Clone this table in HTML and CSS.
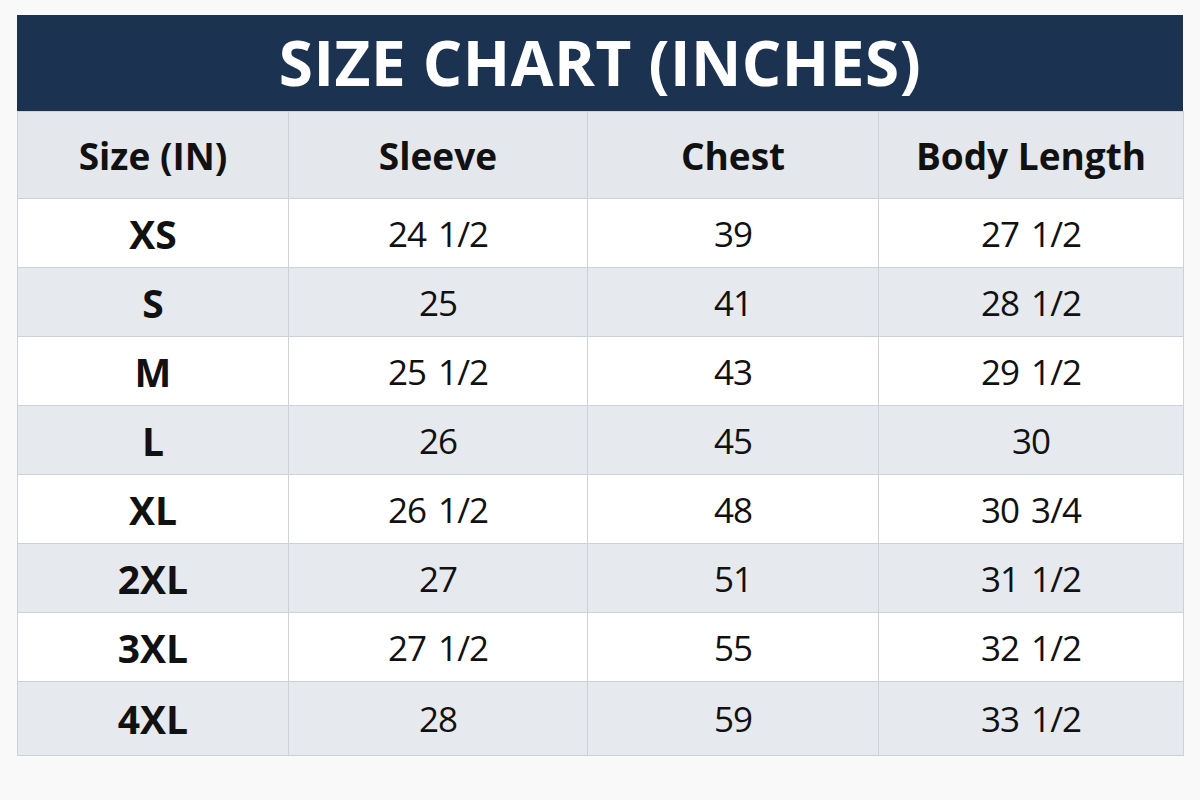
FILE: index.html
```html
<!DOCTYPE html>
<html lang="en">
<head>
<meta charset="utf-8">
<title>Size Chart</title>
<link rel="stylesheet" href="styles.css">
</head>
<body>
<div class="chart">
  <div class="title">SIZE CHART (INCHES)</div>
  <table class="grid">
    <colgroup>
      <col class="c1"><col class="c2"><col class="c3"><col class="c4">
    </colgroup>
    <thead>
      <tr><th>Size (IN)</th><th>Sleeve</th><th>Chest</th><th>Body Length</th></tr>
    </thead>
    <tbody>
      <tr><td class="sz">XS</td><td>24 1/2</td><td>39</td><td>27 1/2</td></tr>
      <tr><td class="sz">S</td><td>25</td><td>41</td><td>28 1/2</td></tr>
      <tr><td class="sz">M</td><td>25 1/2</td><td>43</td><td>29 1/2</td></tr>
      <tr><td class="sz">L</td><td>26</td><td>45</td><td>30</td></tr>
      <tr><td class="sz">XL</td><td>26 1/2</td><td>48</td><td>30 3/4</td></tr>
      <tr><td class="sz">2XL</td><td>27</td><td>51</td><td>31 1/2</td></tr>
      <tr><td class="sz">3XL</td><td>27 1/2</td><td>55</td><td>32 1/2</td></tr>
      <tr><td class="sz">4XL</td><td>28</td><td>59</td><td>33 1/2</td></tr>
    </tbody>
  </table>
</div>
</body>
</html>
```
FILE: styles.css
```css
html, body {
  margin: 0;
  padding: 0;
  background: #f9f9f9;
}
body {
  font-family: "Open Sans", "Liberation Sans", sans-serif;
  color: #111;
  padding: 15px 0 0 17px;
}
.chart {
  width: 1166px;
}
.title {
  background: #1b3350;
  color: #fff;
  font-weight: 700;
  font-size: 62px;
  height: 96px;
  line-height: 94px;
  padding-bottom: 2px;
  box-sizing: border-box;
  text-align: center;
  letter-spacing: 0.5px;
}
.grid {
  width: 1166px;
  border-collapse: collapse;
  table-layout: fixed;
}
.c1 { width: 271px; }
.c2 { width: 299px; }
.c3 { width: 291px; }
.c4 { width: 305px; }
.grid th, .grid td {
  border: 1px solid #cdd2d8;
  text-align: center;
  padding: 0;
}
.grid thead th {
  background: #e4e7eb;
  height: 86px;
  font-size: 37px;
  font-weight: 700;
}
.grid td {
  height: 68px;
  font-size: 35px;
  letter-spacing: -1px;
  word-spacing: 4px;
  font-weight: 400;
  background: #ffffff;
}
.grid tbody tr:nth-child(even) td {
  background: #e6e9ed;
}
.grid tbody tr:last-child td {
  height: 73px;
}
.grid td.sz {
  font-weight: 700;
  font-size: 39px;
  letter-spacing: 0;
}
```
